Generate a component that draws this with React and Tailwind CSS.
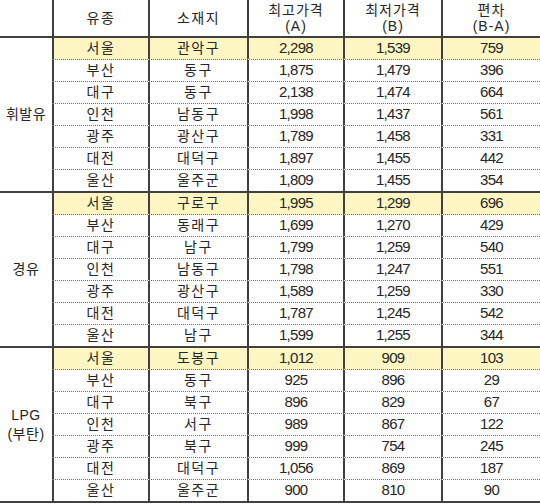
import React from "react";

const groups = [
  {
    label: ["휘발유"],
    rows: [
      ["서울", "관악구", "2,298", "1,539", "759"],
      ["부산", "동구", "1,875", "1,479", "396"],
      ["대구", "동구", "2,138", "1,474", "664"],
      ["인천", "남동구", "1,998", "1,437", "561"],
      ["광주", "광산구", "1,789", "1,458", "331"],
      ["대전", "대덕구", "1,897", "1,455", "442"],
      ["울산", "울주군", "1,809", "1,455", "354"],
    ],
  },
  {
    label: ["경유"],
    rows: [
      ["서울", "구로구", "1,995", "1,299", "696"],
      ["부산", "동래구", "1,699", "1,270", "429"],
      ["대구", "남구", "1,799", "1,259", "540"],
      ["인천", "남동구", "1,798", "1,247", "551"],
      ["광주", "광산구", "1,589", "1,259", "330"],
      ["대전", "대덕구", "1,787", "1,245", "542"],
      ["울산", "남구", "1,599", "1,255", "344"],
    ],
  },
  {
    label: ["LPG", "(부탄)"],
    rows: [
      ["서울", "도봉구", "1,012", "909", "103"],
      ["부산", "동구", "925", "896", "29"],
      ["대구", "북구", "896", "829", "67"],
      ["인천", "서구", "989", "867", "122"],
      ["광주", "북구", "999", "754", "245"],
      ["대전", "대덕구", "1,056", "869", "187"],
      ["울산", "울주군", "900", "810", "90"],
    ],
  },
];

const widths = ["w-[96px]", "w-[99px]", "w-[96px]", "w-[98px]", "w-[99px]"];

function Row({ cells, highlight, last }) {
  return (
    <div
      className={`flex ${last ? "h-[23px] border-b-2 border-solid border-[#404040]" : "h-[22px] border-b border-dotted border-[#707070]"} ${highlight ? "bg-[#fdf6c2]" : "bg-white"}`}
    >
      {cells.map((c, i) => (
        <div
          key={i}
          className={`${widths[i]} flex shrink-0 items-center justify-center border-l-2 border-[#404040] ${i < 2 ? "text-[14px] tracking-[1.5px]" : "text-[15px] tracking-[-0.7px]"}`}
        >
          {c}
        </div>
      ))}
    </div>
  );
}

export default function App() {
  return (
    <div
      className="w-[540px] h-[504px] overflow-hidden bg-white text-[#262626]"
      style={{ fontFamily: '"Liberation Sans", "Noto Sans CJK KR", sans-serif' }}
    >
      <div className="flex h-[38px] border-b-2 border-[#404040] text-[14px] leading-[16px] tracking-[1px]">
        <div className="w-[52px] shrink-0"></div>
        <div className={`${widths[0]} flex shrink-0 items-center justify-center border-l-2 border-[#404040] tracking-[1.5px]`}>
          유종
        </div>
        <div className={`${widths[1]} flex shrink-0 items-center justify-center border-l-2 border-[#404040] tracking-[1.5px]`}>
          소재지
        </div>
        <div className={`${widths[2]} flex shrink-0 flex-col items-center justify-center border-l-2 border-[#404040]`}>
          <span>최고가격</span>
          <span>(A)</span>
        </div>
        <div className={`${widths[3]} flex shrink-0 flex-col items-center justify-center border-l-2 border-[#404040]`}>
          <span>최저가격</span>
          <span>(B)</span>
        </div>
        <div className={`${widths[4]} flex shrink-0 flex-col items-center justify-center border-l-2 border-[#404040]`}>
          <span>편차</span>
          <span>(B-A)</span>
        </div>
      </div>

      {groups.map((g, gi) => (
        <div key={gi} className="flex">
          <div className="flex w-[52px] shrink-0 flex-col items-center justify-center border-b-2 border-[#404040] text-[14px] leading-[19px] tracking-[0.5px]">
            {g.label.map((l) => (
              <span key={l}>{l}</span>
            ))}
          </div>
          <div className="flex flex-col">
            {g.rows.map((r, ri) => (
              <Row
                key={ri}
                cells={r}
                highlight={ri === 0}
                last={ri === g.rows.length - 1}
              />
            ))}
          </div>
        </div>
      ))}
    </div>
  );
}
